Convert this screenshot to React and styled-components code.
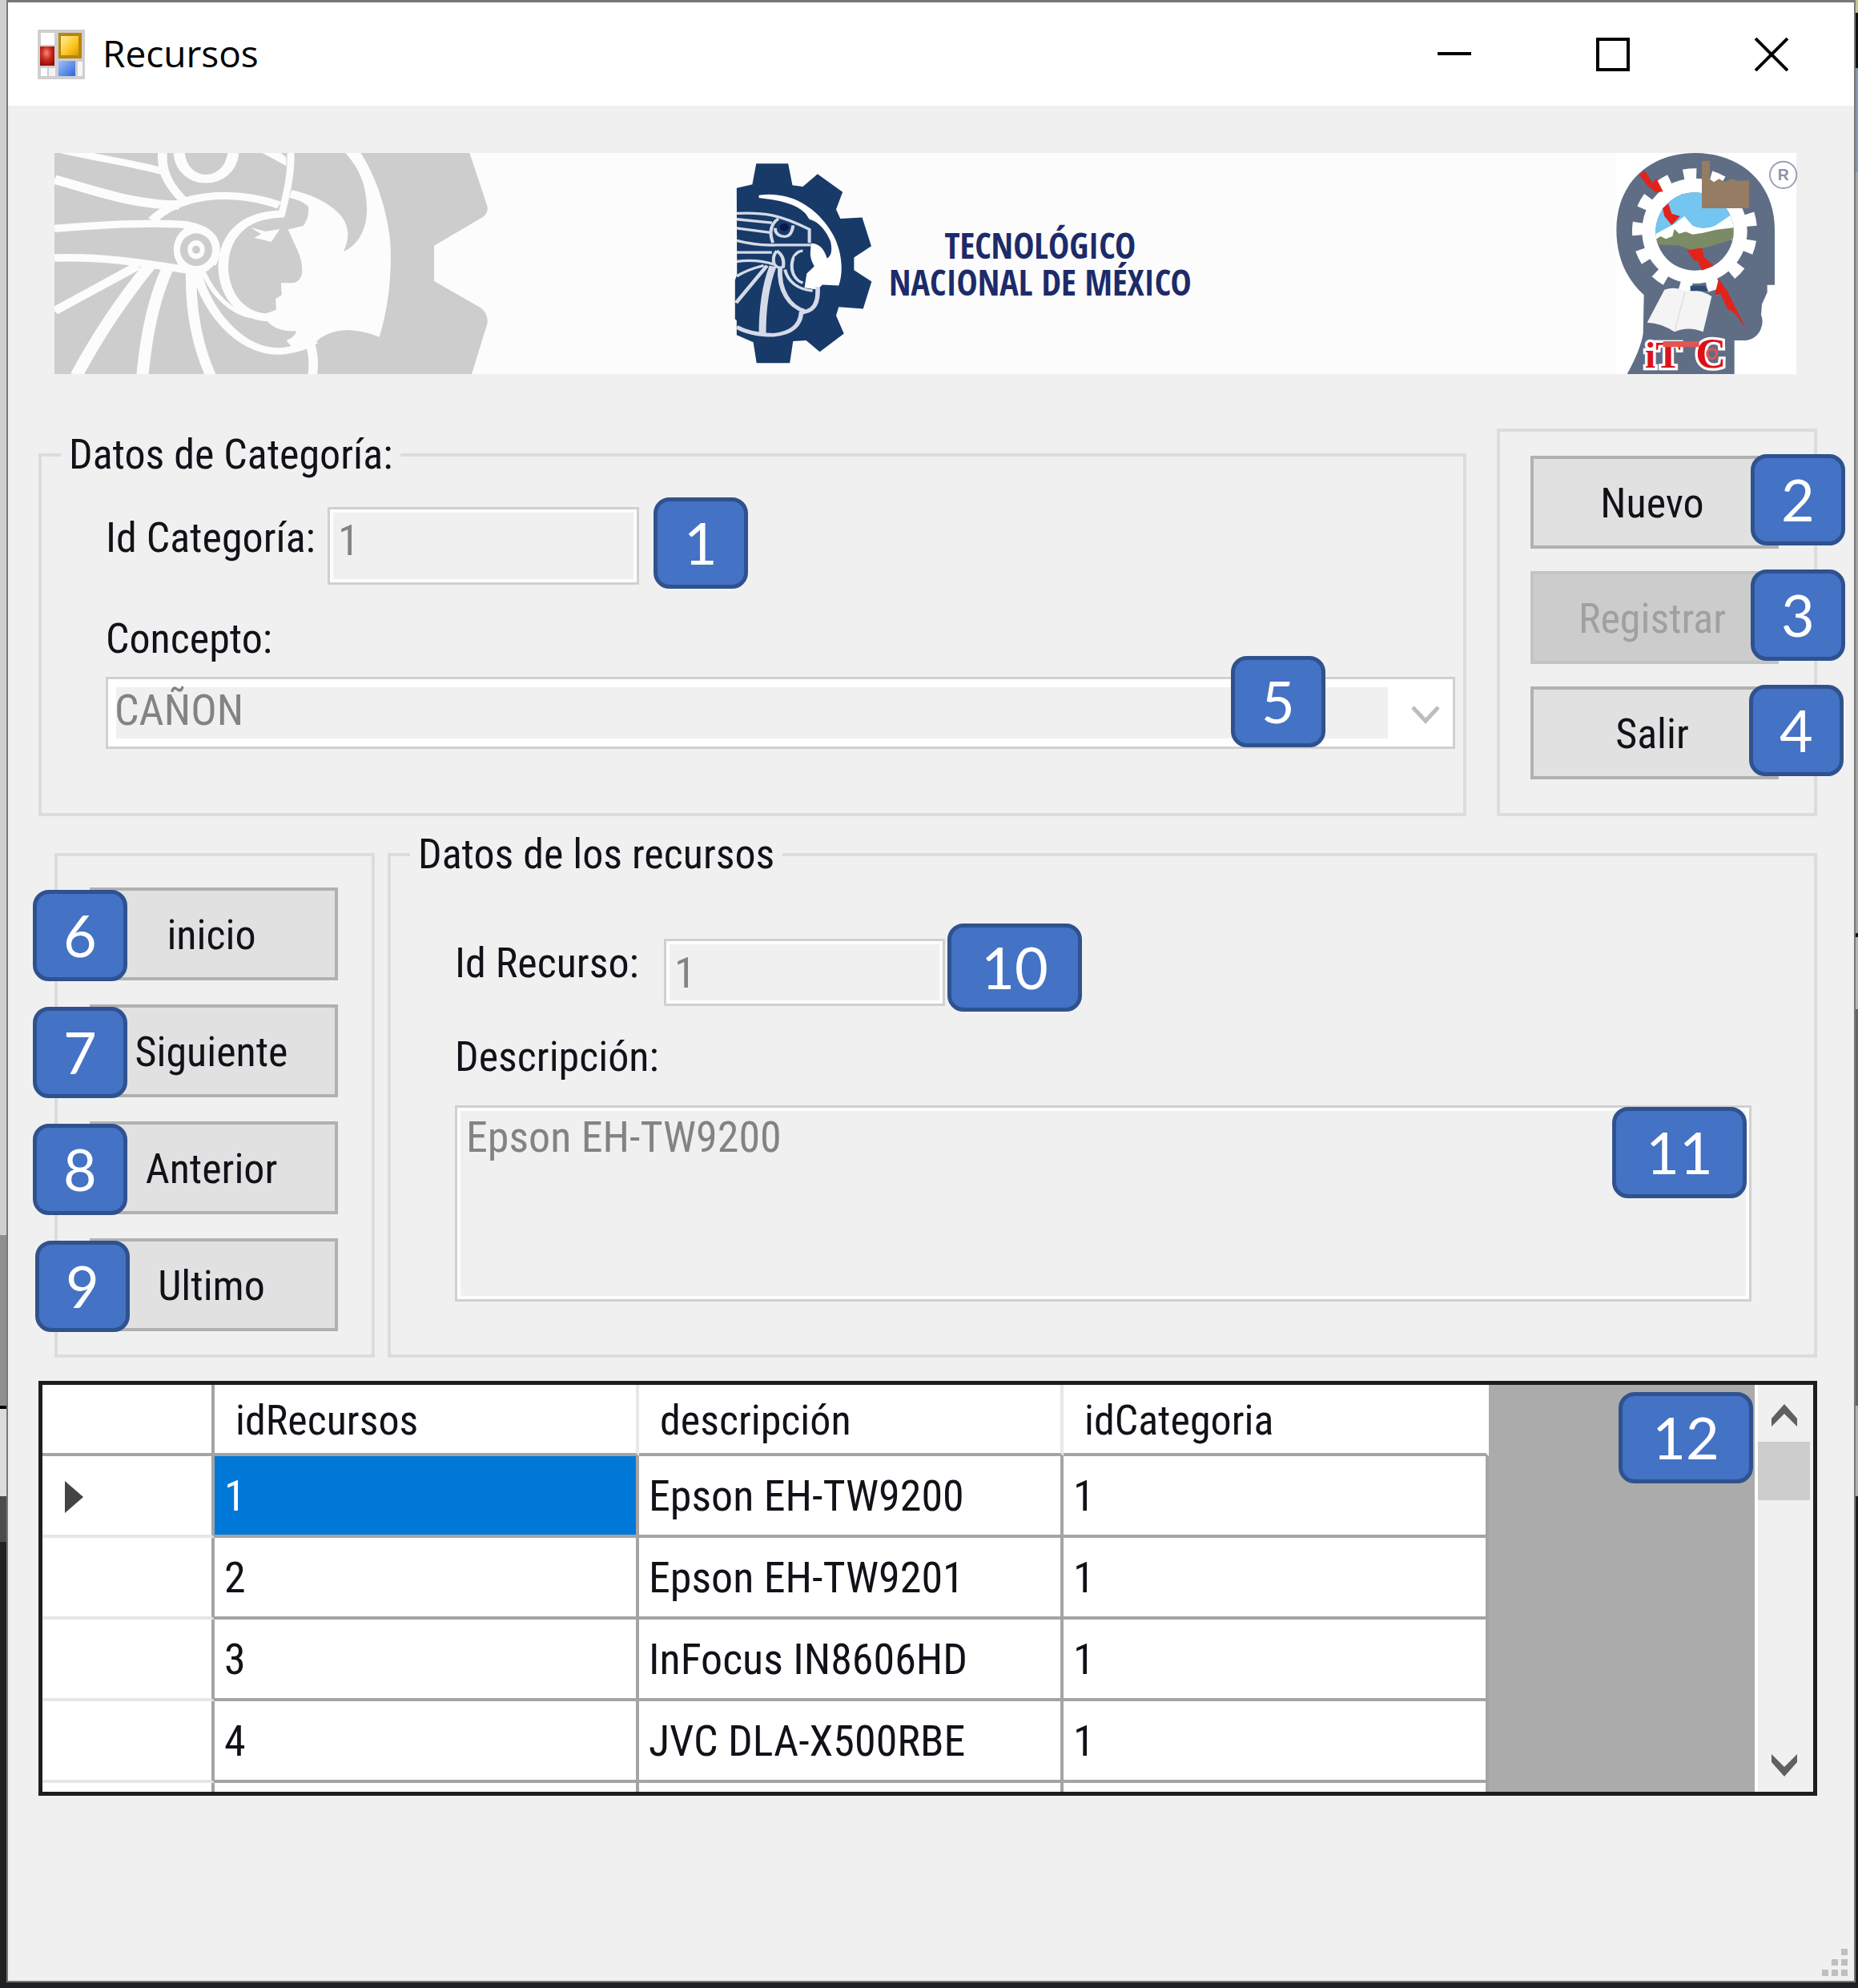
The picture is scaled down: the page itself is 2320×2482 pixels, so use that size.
import React from "react";
import styled, { createGlobalStyle, css } from "styled-components";

const GlobalStyle = createGlobalStyle`
  * { box-sizing: border-box; }
  html { background: #1f2021; }
  body {
    margin: 0;
    color: #111118;
    font-family: "Roboto Condensed", "Liberation Sans", Arial, sans-serif;
    font-size: 52px;
    line-height: 46px;
  }
  button, input, select, textarea { font: inherit; color: inherit; margin: 0; border-radius: 0; }
`;

/* ---------- desktop and window frame ---------- */

const Desktop = styled.div`
  display: flex;
  min-height: 100vh;
  padding: 0 3px 7px 8px;
  background:
    linear-gradient(#cfcfcf 1542px, #8f8f8f 1542px 1755px, #000 1755px 1759px, #dcdcdc 1759px 1868px, #4c4c4e 1868px 1925px, #222224 1925px)
      left top / 8px calc(100% - 7px) no-repeat,
    linear-gradient(#c9c690 16px, #111 16px 85px, #8496b0 85px 215px, #a6a6a6 215px 1165px, #111 1165px 1170px, #b5b5b5 1170px 1260px, #666 1260px 1755px, #b0b0b0 1755px 1868px, #1c1f20 1868px)
      right top / 3px calc(100% - 7px) no-repeat,
    #1f2021;
`;

const Window = styled.div`
  flex: 1;
  min-width: 0;
  display: flex;
  flex-direction: column;
  background: #f0f0f0;
  border: 2px solid #777;
  border-top-width: 3px;
`;

const TitleBar = styled.header`
  display: flex;
  align-items: center;
  height: 129px;
  padding: 0 4px 0 37px;
  background: #fff;
`;

const AppTitle = styled.h1`
  flex: 1;
  margin: 0 0 0 22px;
  padding-bottom: 4px;
  color: #000;
  font: 400 46px/60px "Open Sans", "Noto Sans", sans-serif;
`;

const CaptionButton = styled.button`
  display: flex;
  align-items: center;
  justify-content: center;
  width: 198px;
  height: 100%;
  padding: 0;
  border: 0;
  background: transparent;
`;

const Content = styled.main`
  padding: 59px 46px 0 38px;
`;

const ResizeGrip = styled.div`
  display: flex;
  justify-content: flex-end;
  margin-top: auto;
  padding: 0 6px 6px 0;
`;

/* ---------- banner ---------- */

const Banner = styled.div`
  display: grid;
  grid-template-columns: 542px minmax(0, 1fr) 226px;
  align-items: center;
  height: 276px;
  margin: 0 26px 0 20px;
  background: #fcfcfc;
  svg { display: block; overflow: visible; }
`;

const Brand = styled.div`
  display: flex;
  align-items: center;
  gap: 20px;
  padding-left: 307px;
`;

const BrandName = styled.p`
  display: flex;
  flex-direction: column;
  margin: 0;
  color: #1c2b69;
  text-align: center;
  white-space: nowrap;
  font: 700 44px/46px "Open Sans Condensed", Lato, sans-serif;
`;

/* ---------- groups ---------- */

const TopRow = styled.div`
  display: grid;
  grid-template-columns: minmax(0, 1fr) 400px;
  gap: 38px;
  align-items: end;
  margin-top: 68px;
`;

const BottomRow = styled.div`
  display: grid;
  grid-template-columns: 400px minmax(0, 1fr);
  gap: 16px;
  align-items: end;
  margin-top: 25px;
  padding-left: 20px;
`;

const Group = styled.fieldset`
  min-width: 0;
  margin: 0;
  padding: 0 0 0 24px;
  border: 4px solid #dcdcdc;
`;

const GroupTitle = styled.legend`
  padding: 0 10px;
`;

const GroupBody = styled.div`
  padding: ${p => p.$pad};
`;

const ButtonGroup = styled.div`
  display: flex;
  flex-direction: column;
  gap: ${p => p.$gap};
  padding: ${p => p.$pad};
  border: 4px solid #dcdcdc;
`;

const Anchor = styled.div`
  position: relative;
`;

const PushButton = styled.button`
  display: block;
  width: 100%;
  height: 116px;
  padding: 4px 6px 0 0;
  border: 4px solid #b1b1b1;
  background: #e1e1e1;
  &:disabled {
    border-color: #c3c3c3;
    background: #cccccc;
    color: #a0a0a0;
  }
`;

/* ---------- fields ---------- */

const FieldRow = styled.div`
  display: grid;
  grid-template-columns: ${p => p.$labelWidth} ${p => p.$fieldWidth};
`;

const FieldLabel = styled.label`
  display: block;
  padding-top: ${p => p.$top || "0"};
  margin: ${p => p.$margin || "0"};
  white-space: nowrap;
`;

const sunken = css`
  display: block;
  width: 100%;
  border: 3px solid #d0d0d0;
  box-shadow: inset 0 0 0 4px #fdfdfd;
  background: #f0f0f0;
  color: #838383;
  font-size: 54px;
  opacity: 1;
`;

const TextBox = styled.input`
  ${sunken}
  height: ${p => p.$height};
  padding: ${p => p.$pad};
`;

const TextArea = styled.textarea`
  ${sunken}
  height: 245px;
  padding: 14px 11px;
  resize: none;
`;

const ComboBox = styled.select`
  ${sunken}
  appearance: none;
  height: 90px;
  padding: 0 84px 6px 8px;
  box-shadow: none;
  line-height: 72px;
  background: linear-gradient(#f0f0f0, #f0f0f0) 10px 10px / calc(100% - 91px) 64px no-repeat #fff;
`;

const ComboArrow = styled.svg`
  position: absolute;
  right: 19px;
  top: 35px;
  pointer-events: none;
`;

/* ---------- numbered callouts ---------- */

const Badge = styled.span`
  position: absolute;
  z-index: 1;
  top: ${p => p.$top};
  left: ${p => p.$left || "auto"};
  right: ${p => p.$right || "auto"};
  display: flex;
  align-items: center;
  justify-content: center;
  width: ${p => (p.$wide ? "168px" : "118px")};
  height: ${p => (p.$low ? "110px" : "114px")};
  padding-bottom: 2px;
  border: 5px solid #2f528f;
  border-radius: 20px;
  background: #4472c4;
  color: #fff;
  font: 400 72px/72px Lato, sans-serif;
`;

/* ---------- data grid ---------- */

const GridAnchor = styled.div`
  position: relative;
  margin-top: 29px;
`;

const GridFrame = styled.div`
  display: flex;
  height: 518px;
  overflow: hidden;
  border: 5px solid #1e1e1e;
  background: #ababab;
`;

const TableArea = styled.div`
  flex: 1;
  min-width: 0;
  overflow: hidden;
`;

const Table = styled.table`
  width: 1806px;
  table-layout: fixed;
  border-collapse: separate;
  border-spacing: 0;
`;

const HeadCell = styled.th`
  width: ${p => p.$width};
  height: 89px;
  padding: 4px 0 0 26px;
  border-right: 4px solid ${p => p.$edge || "#e8e8e8"};
  border-bottom: 4px solid #a4a4a4;
  background: #fff;
  font-weight: 400;
  text-align: left;
`;

const RowHead = styled.th`
  height: 102px;
  padding: 4px 0 0 28px;
  border-right: 4px solid #a4a4a4;
  border-bottom: 4px solid #e6e6e6;
  background: #fff;
  text-align: left;
  svg { display: block; }
`;

const Cell = styled.td`
  height: 102px;
  padding: 2px 0 0 12px;
  border-right: 4px solid #a4a4a4;
  border-bottom: 4px solid #a4a4a4;
  background: ${p => (p.$selected ? "#0078d7" : "#fff")};
  color: ${p => (p.$selected ? "#fff" : "inherit")};
  font-size: 54px;
  white-space: nowrap;
`;

const ScrollBar = styled.div`
  display: flex;
  flex-direction: column;
  width: 73px;
  border-left: 4px solid #fff;
  background: #f0f0f0;
`;

const ScrollButton = styled.button`
  display: flex;
  align-items: center;
  justify-content: center;
  height: 71px;
  padding: 4px 4px 0 0;
  border: 0;
  background: transparent;
`;

const ScrollTrack = styled.div`
  flex: 1;
`;

const ScrollThumb = styled.div`
  height: 73px;
  margin-right: 4px;
  background: #cdcdcd;
`;

/* ---------- drawings ---------- */

const FormIcon = () => (
  <svg width="59" height="62" viewBox="0 0 59 62" aria-hidden="true">
    <defs>
      <linearGradient id="gold" x1="0" y1="0" x2="1" y2="1">
        <stop offset="0" stopColor="#fff0a0" /><stop offset="0.6" stopColor="#fbc51e" /><stop offset="1" stopColor="#d99a00" />
      </linearGradient>
      <linearGradient id="blue" x1="0" y1="0" x2="1" y2="1">
        <stop offset="0" stopColor="#9cc0ff" /><stop offset="1" stopColor="#2f66d8" />
      </linearGradient>
      <radialGradient id="red" cx="0.45" cy="0.35" r="0.7">
        <stop offset="0" stopColor="#f08a80" /><stop offset="0.5" stopColor="#cc2a1e" /><stop offset="1" stopColor="#8e0d08" />
      </radialGradient>
    </defs>
    <rect width="59" height="62" fill="#cfcfcf" />
    <rect x="4" y="4" width="17" height="15" fill="#fff" />
    <rect x="4" y="48" width="8" height="10" fill="#fff" />
    <rect x="14" y="48" width="8" height="10" fill="#f3f3f3" />
    <rect x="50" y="40" width="6" height="18" fill="#f6f6f6" />
    <rect x="3" y="21" width="18" height="24" fill="url(#red)" />
    <rect x="26" y="4" width="29" height="32" fill="#b8860b" />
    <rect x="29" y="8" width="22" height="24" fill="url(#gold)" />
    <rect x="26" y="39" width="21" height="19" fill="url(#blue)" />
  </svg>
);

const EagleFrame = styled.div`
  overflow: hidden;
`;

const EagleArt = () => (
  <EagleFrame>
    <svg width="542" height="276" viewBox="152 573 1213 828" preserveAspectRatio="none" aria-hidden="true">
      <path fill="#cdcdcd" d="M152 573H1312L1361 770Q1366 795 1350 812L1213 920V1053L1342 1152Q1364 1172 1362 1210L1318 1401H152Z" />
      <g fill="none" stroke="#fcfcfc">
        <path strokeWidth="26" d="M170 560C260 590 370 610 455 642" />
        <path strokeWidth="34" d="M152 672C260 712 370 768 500 768" />
        <path strokeWidth="26" d="M454 573C450 650 475 700 518 758" />
        <path strokeWidth="32" d="M500 573C510 702 640 702 652 573" />
        <path strokeWidth="28" d="M425 825C500 730 640 705 780 768" />
        <path strokeWidth="20" d="M812 573C815 650 800 730 785 812" />
        <path strokeWidth="28" d="M152 856C300 840 440 832 520 842C590 860 618 910 590 990" />
        <path strokeWidth="28" d="M152 966C290 960 400 985 530 1012" />
        <path strokeWidth="28" d="M792 802C670 800 620 900 624 1015C632 1120 680 1188 755 1190" />
        <path strokeWidth="30" d="M152 1165L385 995" />
        <path strokeWidth="36" d="M214 1405Q300 1190 418 995" />
        <path strokeWidth="34" d="M398 1405Q415 1160 468 1005" />
        <path strokeWidth="30" d="M588 1405C550 1290 532 1170 534 1020" />
        <path strokeWidth="26" d="M550 1025C590 1200 690 1330 795 1314Q850 1304 880 1275" />
        <path strokeWidth="14" d="M568 1020C600 1115 650 1170 700 1185" />
        <path strokeWidth="26" d="M866 1285Q880 1340 873 1405" />
      </g>
      <g fill="#fcfcfc">
        <path d="M965 573C1010 640 1025 705 1025 790C1024 860 1000 920 960 942C978 890 975 850 955 812C930 770 880 730 815 712L808 740Q845 750 862 775Q864 815 848 845L803 855L832 940Q848 990 843 1030Q835 1060 815 1060L785 1060L787 1105L770 1120L772 1160L742 1175L748 1205Q775 1243 828 1240Q825 1262 800 1275L815 1300L880 1285Q910 1240 970 1236Q1015 1238 1060 1262C1090 1130 1095 1000 1090 900C1080 780 1050 660 1008 573Z" />
        <path d="M733 573L800 622L800 590L785 573Z" />
        <path d="M700 852L742 867L782 858L758 906L710 890L730 877Z" />
        <ellipse cx="548" cy="935" rx="63" ry="92" />
      </g>
      <ellipse cx="548" cy="935" rx="45" ry="61" fill="#cdcdcd" />
      <ellipse cx="548" cy="935" rx="24" ry="35" fill="#fcfcfc" />
      <ellipse cx="548" cy="935" rx="11" ry="15" fill="#cdcdcd" />
      <path fill="#cdcdcd" d="M715 850Q755 810 800 815L848 845L803 860L770 856Z" />
    </svg>
  </EagleFrame>
);

const GearLogo = () => (
  <svg width="173" height="252" viewBox="90 100 425 755" preserveAspectRatio="none" aria-hidden="true">
    <path fill="#173a69" d="M97 195L145 182L157 104H255L268 185L300 190L345 143L422 210L402 275L415 310L482 305L510 412L457 455V502L511 545L485 647L410 640L402 672L426 740L352 808L310 765L270 768L260 850H158L148 772L97 745V690L92 685V540L98 520Z" />
    <path fill="#fff" d="M165 222C270 205 350 275 395 375C425 450 422 520 410 560L360 557L345 575L305 568L312 515L335 488L322 455L325 402Q360 402 374 458Q394 445 385 395C370 350 345 320 320 312L308 290C275 250 220 240 165 232Z" />
    <g fill="none" stroke="#d5dae8" strokeWidth="10">
      <path d="M97 290C180 285 230 295 320 350V400" />
      <path d="M97 312L205 325M97 345L200 362M97 392Q160 412 220 408H325" />
      <path d="M97 436H205M97 470Q160 460 215 482" />
      <path d="M208 400Q190 340 225 310M270 335Q265 385 235 375Q215 370 215 345" />
      <path d="M97 525Q130 500 180 485" />
      <path strokeWidth="12" d="M95 625L190 485" />
      <path strokeWidth="22" d="M176 740Q176 590 208 488" />
      <path strokeWidth="14" d="M230 490C225 580 260 640 305 655" />
      <path strokeWidth="14" d="M345 565Q350 640 315 655Q300 660 295 662Q290 735 210 745Q140 745 97 715" />
      <path d="M300 430C260 430 250 530 300 550M245 500Q260 570 330 580M220 430Q245 450 240 490Q225 500 212 480Q205 450 220 430" />
    </g>
    <circle cx="243" cy="342" r="14" fill="#081a4a" />
    <path fill="#173a69" d="M275 452Q290 435 320 432L330 485L308 505L305 530Q270 520 275 452Z" />
  </svg>
);

const HeadLogo = () => (
  <svg width="226" height="276" viewBox="111 63 678 828" role="img" aria-label="ITC">
    <rect x="111" y="63" width="678" height="828" fill="#fff" />
    <path fill="#5f6e85" d="M155 891Q205 800 215 740L218 595Q115 500 115 350C115 175 240 63 410 63S708 175 708 350V557H680V585L660 630L657 670Q668 695 655 725Q635 765 590 765H557V891Z" />
    <circle cx="408" cy="355" r="168" fill="none" stroke="#fff" strokeWidth="58" />
    <circle cx="408" cy="355" r="212" fill="none" stroke="#fff" strokeWidth="44" strokeDasharray="48 54.47" strokeDashoffset="-34" />
    <clipPath id="lens"><circle cx="408" cy="357" r="146" /></clipPath>
    <g clipPath="url(#lens)">
      <rect x="255" y="205" width="300" height="300" fill="#5f6e85" />
      <rect x="255" y="205" width="300" height="160" fill="#74c5f0" />
      <path fill="#fff" d="M255 370L330 330L370 300L400 335Q440 355 485 335L560 285V390H255Z" />
      <path fill="#7a8b66" d="M255 392L280 375L300 385L325 375L332 348L350 365L375 358L400 368L440 362L490 350L560 342V385L480 408L405 430L350 410L255 405Z" />
    </g>
    <path fill="#957c62" d="M435 92H465L466 162L480 172L500 160L520 172L545 160L570 168L612 165V270H435Z" />
    <g fill="#e2231a">
      <path d="M200 145L222 130L250 175L265 158L290 208L262 210L232 185Z" />
      <path d="M288 270L310 253L322 290L354 300L322 333L295 300Z" />
      <path d="M380 428L435 418L445 455L480 485L435 503L420 468L405 465Z" />
      <path d="M483 595L498 535L530 580L555 630L600 720L560 665L530 645L505 590Z" />
    </g>
    <path fill="#f4f4f4" d="M295 575Q335 562 372 580Q420 568 472 600L440 733Q385 710 332 733Q285 700 230 698Z" />
    <path fill="none" stroke="#dcdcdc" strokeWidth="4" d="M372 582L334 728" />
    <path fill="#2d4a74" d="M392 560H445L460 580H392Z" />
    <g fontFamily="Liberation Serif, serif" fontWeight="700" fill="#dd1218" stroke="#fff" strokeWidth="20" paintOrder="stroke">
      <text x="222" y="868" fontSize="142">iT</text>
      <text x="412" y="868" fontSize="158">C</text>
      <path d="M290 768H425V790H290Z" stroke="none" fill="#e25550" />
      <circle cx="473" cy="815" r="18" fill="none" stroke="#e25550" strokeWidth="9" />
    </g>
    <circle cx="740" cy="145" r="50" fill="none" stroke="#9aa3b3" strokeWidth="6" />
    <text x="740" y="166" textAnchor="middle" fontFamily="Liberation Sans, sans-serif" fontWeight="700" fontSize="58" fill="#8b95a6">R</text>
  </svg>
);

const grip = [[24, 0], [12, 13], [24, 13], [0, 26], [12, 26], [24, 26]];

const rows = [
  [1, "Epson EH-TW9200", 1],
  [2, "Epson EH-TW9201", 1],
  [3, "InFocus IN8606HD", 1],
  [4, "JVC DLA-X500RBE", 1],
  ["", "", ""],
];

const actions = [
  { text: "Nuevo", n: 2, right: "-83px" },
  { text: "Registrar", n: 3, right: "-83px", disabled: true },
  { text: "Salir", n: 4, right: "-81px" },
];

const moves = [
  { text: "inicio", n: 6, left: "-71px" },
  { text: "Siguiente", n: 7, left: "-71px" },
  { text: "Anterior", n: 8, left: "-71px" },
  { text: "Ultimo", n: 9, left: "-68px" },
];

export default function App() {
  return (
    <Desktop>
      <GlobalStyle />
      <Window>
        <TitleBar>
          <FormIcon />
          <AppTitle>Recursos</AppTitle>
          <CaptionButton aria-label="Minimizar">
            <svg width="42" height="42" viewBox="0 0 42 42"><path d="M0 20H42" stroke="#000" strokeWidth="4" /></svg>
          </CaptionButton>
          <CaptionButton aria-label="Maximizar">
            <svg width="42" height="42" viewBox="0 0 42 42"><rect x="2" y="2" width="38" height="38" fill="none" stroke="#000" strokeWidth="4" /></svg>
          </CaptionButton>
          <CaptionButton aria-label="Cerrar">
            <svg width="42" height="42" viewBox="0 0 42 42"><path d="M1 1L41 41M41 1L1 41" stroke="#000" strokeWidth="4" /></svg>
          </CaptionButton>
        </TitleBar>

        <Content>
          <Banner>
            <EagleArt />
            <Brand>
              <GearLogo />
              <BrandName><span>TECNOLÓGICO</span> <span>NACIONAL DE MÉXICO</span></BrandName>
            </Brand>
            <HeadLogo />
          </Banner>

          <TopRow>
            <Group>
              <GroupTitle>Datos de Categoría:</GroupTitle>
              <GroupBody $pad="42px 10px 80px 56px">
                <FieldRow $labelWidth="277px" $fieldWidth="389px">
                  <FieldLabel htmlFor="idCategoria" $top="16px">Id Categoría:</FieldLabel>
                  <Anchor>
                    <TextBox id="idCategoria" defaultValue="1" disabled $height="97px" $pad="0 10px 14px" />
                    <Badge $top="-12px" $left="407px">1</Badge>
                  </Anchor>
                </FieldRow>
                <FieldLabel htmlFor="concepto" $margin="45px 0 24px">Concepto:</FieldLabel>
                <Anchor>
                  <ComboBox id="concepto" disabled><option>CAÑON</option></ComboBox>
                  <ComboArrow width="36" height="24" viewBox="0 0 36 24">
                    <path d="M2 3L18 20L34 3" fill="none" stroke="#bdbdbd" strokeWidth="5" />
                  </ComboArrow>
                  <Badge $top="-26px" $right="162px">5</Badge>
                </Anchor>
              </GroupBody>
            </Group>
            <ButtonGroup $gap="28px" $pad="30px 44px 42px 38px">
              {actions.map(a => (
                <Anchor key={a.text}>
                  <PushButton disabled={a.disabled}>{a.text}</PushButton>
                  <Badge $top="-2px" $right={a.right}>{a.n}</Badge>
                </Anchor>
              ))}
            </ButtonGroup>
          </TopRow>

          <BottomRow>
            <ButtonGroup $gap="30px" $pad="39px 42px 29px 40px">
              {moves.map(m => (
                <Anchor key={m.text}>
                  <PushButton>{m.text}</PushButton>
                  <Badge $top="3px" $left={m.left}>{m.n}</Badge>
                </Anchor>
              ))}
            </ButtonGroup>
            <Group>
              <GroupTitle>Datos de los recursos</GroupTitle>
              <GroupBody $pad="82px 78px 66px 56px">
                <FieldRow $labelWidth="261px" $fieldWidth="351px">
                  <FieldLabel htmlFor="idRecurso" $top="8px">Id Recurso:</FieldLabel>
                  <Anchor>
                    <TextBox id="idRecurso" defaultValue="1" disabled $height="84px" $pad="0 10px" />
                    <Badge $wide $low $top="-19px" $left="354px">10</Badge>
                  </Anchor>
                </FieldRow>
                <FieldLabel htmlFor="descripcion" $margin="41px 0 37px">Descripción:</FieldLabel>
                <Anchor>
                  <TextArea id="descripcion" defaultValue="Epson EH-TW9200" disabled />
                  <Badge $wide $top="2px" $right="6px">11</Badge>
                </Anchor>
              </GroupBody>
            </Group>
          </BottomRow>

          <GridAnchor>
            <GridFrame>
              <TableArea>
                <Table>
                  <thead>
                    <tr>
                      <HeadCell $width="215px" $edge="#a4a4a4" aria-label="Fila" />
                      <HeadCell $width="530px">idRecursos</HeadCell>
                      <HeadCell $width="530px">descripción</HeadCell>
                      <HeadCell $width="531px" $edge="#fff">idCategoria</HeadCell>
                    </tr>
                  </thead>
                  <tbody>
                    {rows.map((r, i) => (
                      <tr key={i}>
                        <RowHead scope="row">
                          {i === 0 && (
                            <svg width="23" height="40" viewBox="0 0 23 40"><path d="M0 0L23 20L0 40Z" fill="#444" /></svg>
                          )}
                        </RowHead>
                        {r.map((v, c) => <Cell key={c} $selected={i === 0 && c === 0}>{v}</Cell>)}
                      </tr>
                    ))}
                  </tbody>
                </Table>
              </TableArea>
              <ScrollBar>
                <ScrollButton aria-label="Subir">
                  <svg width="32" height="28" viewBox="0 0 32 28"><path d="M0 18L16 0L32 18V28L16 12L0 28Z" fill="#606060" /></svg>
                </ScrollButton>
                <ScrollTrack><ScrollThumb /></ScrollTrack>
                <ScrollButton aria-label="Bajar">
                  <svg width="32" height="28" viewBox="0 0 32 28"><path d="M0 10L16 28L32 10V0L16 16L0 0Z" fill="#606060" /></svg>
                </ScrollButton>
              </ScrollBar>
            </GridFrame>
            <Badge $wide $top="14px" $right="80px">12</Badge>
          </GridAnchor>
        </Content>

        <ResizeGrip>
          <svg width="34" height="34" viewBox="0 0 34 34" aria-hidden="true">
            {grip.map(([x, y]) => <rect key={`${x}-${y}`} x={x} y={y} width="8" height="8" fill="#bfbfbf" />)}
          </svg>
        </ResizeGrip>
      </Window>
    </Desktop>
  );
}
